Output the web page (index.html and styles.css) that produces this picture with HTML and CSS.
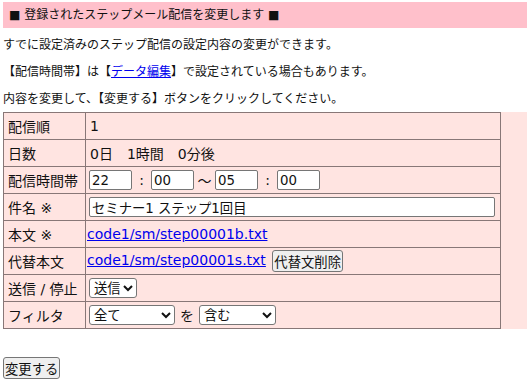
FILE: index.html
```html
<!DOCTYPE html>
<html lang="ja">

<head>
    <meta charset="UTF-8">
    <title>ステップメール配信の変更</title>
    <link rel="stylesheet" href="styles.css">
</head>

<body>
    <div class="title">■ 登録されたステップメール配信を変更します ■</div>

    <p>すでに設定済みのステップ配信の設定内容の変更ができます。</p>
    <p>【配信時間帯】は【<a href="#">データ編集</a>】で設定されている場合もあります。</p>
    <p>内容を変更して、【変更する】ボタンをクリックしてください。</p>

    <form>
        <div class="frame">
            <table class="edit">
                <tr>
                    <th>配信順</th>
                    <td>1</td>
                </tr>
                <tr>
                    <th>日数</th>
                    <td>0日　1時間　0分後</td>
                </tr>
                <tr>
                    <th>配信時間帯</th>
                    <td class="ctl">
                        <input type="text" class="time" value="22"><span class="sep">:</span><input type="text" class="time" value="00"><span class="sep wave">〜</span><input type="text" class="time" value="05"><span class="sep">:</span><input type="text" class="time" value="00">
                    </td>
                </tr>
                <tr>
                    <th>件名 ※</th>
                    <td class="ctl"><input type="text" class="subject" value="セミナー1 ステップ1回目"></td>
                </tr>
                <tr>
                    <th>本文 ※</th>
                    <td class="file"><a href="#">code1/sm/step00001b.txt</a></td>
                </tr>
                <tr>
                    <th>代替本文</th>
                    <td class="file"><a href="#">code1/sm/step00001s.txt</a> <button type="button">代替文削除</button></td>
                </tr>
                <tr>
                    <th>送信 / 停止</th>
                    <td class="ctl">
                        <select class="sel-send">
                            <option>送信</option>
                            <option>停止</option>
                        </select>
                    </td>
                </tr>
                <tr>
                    <th>フィルタ</th>
                    <td class="ctl">
                        <select class="sel-filter">
                            <option>全て</option>
                        </select><span class="sep wo">を</span><select class="sel-match">
                            <option>含む</option>
                            <option>含まない</option>
                        </select>
                    </td>
                </tr>
            </table>
        </div>

        <div class="submit">
            <button type="submit">変更する</button>
        </div>
    </form>
</body>

</html>
```

FILE: styles.css
```css
body {
    font-family: "DejaVu Sans", "Noto Sans CJK JP", sans-serif;
    font-size: 12px;
    color: #111;
    margin: 2px 3px;
}

.title {
    background: #ffc0cb;
    padding: 3px 6px;
    line-height: 20px;
    margin: 0 -1px 2px 0;
}

p {
    margin: 7px 0 0 0;
    padding-top: 1px;
    line-height: 19px;
}

a {
    color: #0000ee;
}

.frame {
    background: #ffe4e1;
    margin-top: 3px;
    margin-right: -1px;
}

.edit {
    width: 498px;
    font-size: 14px;
    border-collapse: collapse;
    border: 1px solid #877;
}

.edit th,
.edit td {
    border: 1px solid #877;
    height: 26px;
    padding: 0 5px 0 4px;
    font-weight: normal;
    text-align: left;
    white-space: nowrap;
}

.edit th {
    width: 72px;
}

.edit td.ctl {
    padding-left: 3px;
}

.edit td.file {
    padding-left: 1px;
}

.edit td.file button {
    margin-left: 2px;
}

input,
select,
button {
    font-family: "DejaVu Sans", "Noto Sans CJK JP", sans-serif;
    font-size: 13.33px;
    color: #111;
    vertical-align: middle;
}

input {
    border: 1px solid #767676;
    border-radius: 2px;
    padding: 0 2px;
    height: 20px;
    box-sizing: border-box;
    margin: 0;
}

.sep {
    display: inline-block;
    width: 19px;
    text-align: center;
    vertical-align: middle;
}

.sep.wave {
    width: 21px;
}

.sep.wo {
    width: 24px;
}

.time {
    width: 43px;
}

.subject {
    width: 406px;
}

select {
    height: 20px;
    margin: 0;
    border: 1px solid #767676;
    border-radius: 3px;
    background: #fff;
}

.sel-send {
    width: 48px;
}

.sel-filter {
    width: 86px;
}

.sel-match {
    width: 77px;
}

button {
    background: #efefef;
    border: 1px solid #767676;
    border-radius: 3px;
    padding: 0 1px;
    height: 22px;
}

.submit {
    margin-top: 28px;
}
```
